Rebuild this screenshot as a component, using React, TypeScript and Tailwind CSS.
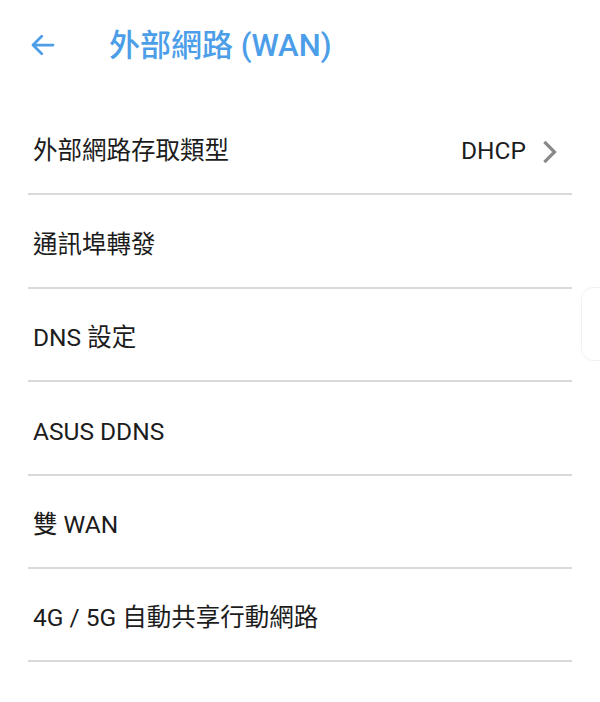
const rows = [
  { label: "外部網路存取類型", value: "DHCP" },
  { label: "通訊埠轉發" },
  { label: "DNS 設定" },
  { label: "ASUS DDNS" },
  { label: "雙 WAN" },
  { label: "4G / 5G 自動共享行動網路" },
];

const font = {
  fontFamily: 'Roboto, "Noto Sans CJK TC", sans-serif',
};

export default function App() {
  return (
    <div className="relative w-[600px] h-[702px] bg-white overflow-hidden" style={font}>
      <div className="flex items-center h-[102px] pb-[12px] pl-[28px]">
        <svg width="30" height="30" viewBox="0 0 24 24" fill="none" stroke="#4c9ee8" strokeWidth="2.2" strokeLinecap="round" strokeLinejoin="round">
          <path d="M20 12H5" />
          <path d="M11 5l-7 7 7 7" />
        </svg>
        <h1 className="ml-[51px] text-[31px] font-medium text-[#4c9ee8] leading-none">外部網路 (WAN)</h1>
      </div>
      <div className="mx-[28px]">
        {rows.map((r) => (
          <div
            key={r.label}
            className="flex items-center justify-between h-[93.4px] border-b-2 border-[#d9d9d9] pl-[5px] pr-[15px]"
          >
            <span className="text-[24.5px] text-[#1c1c1c] leading-none pt-[8px]">{r.label}</span>
            {r.value && (
              <span className="flex items-center gap-[17px] pt-[8px]">
                <span className="text-[24.5px] text-[#1c1c1c] leading-none">{r.value}</span>
                <svg width="14" height="22" viewBox="0 0 14 22" fill="none" stroke="#8a8a8a" strokeWidth="3.2" strokeLinecap="square">
                  <path d="M2.5 2l9 9-9 9" />
                </svg>
              </span>
            )}
          </div>
        ))}
      </div>
      <div className="absolute left-[581px] top-[287px] w-[30px] h-[74px] rounded-[12px] border border-[#f1f1f1]" />
    </div>
  );
}
